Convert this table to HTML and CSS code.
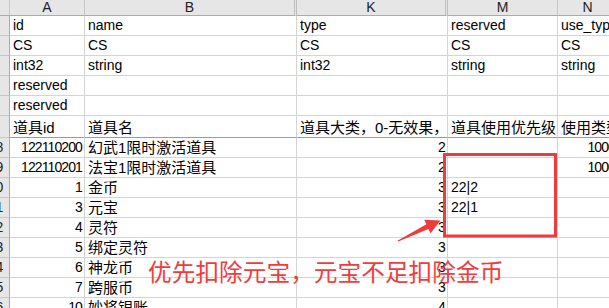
FILE: index.html
```html
<!DOCTYPE html>
<html lang="zh-CN">
<head>
  <meta charset="UTF-8" />
  <title>道具表</title>
  <link rel="stylesheet" href="styles.css">
</head>
<body>
  <div class="sheet">
    <div class="row head">
      <div class="corner"></div>
      <div class="col">A</div>
      <div class="col hidden-after">B</div>
      <div class="col hidden-after">K</div>
      <div class="col">M</div>
      <div class="col">N</div>
    </div>

    <div class="row"><div class="rn">1</div><div class="c">id</div><div class="c">name</div><div class="c">type</div><div class="c">reserved</div><div class="c">use_type</div></div>
    <div class="row"><div class="rn">2</div><div class="c">CS</div><div class="c">CS</div><div class="c">CS</div><div class="c">CS</div><div class="c">CS</div></div>
    <div class="row"><div class="rn">3</div><div class="c">int32</div><div class="c">string</div><div class="c">int32</div><div class="c">string</div><div class="c">string</div></div>
    <div class="row"><div class="rn">4</div><div class="c">reserved</div><div class="c"></div><div class="c"></div><div class="c"></div><div class="c"></div></div>
    <div class="row"><div class="rn">5</div><div class="c">reserved</div><div class="c"></div><div class="c"></div><div class="c"></div><div class="c"></div></div>
    <div class="row frozen"><div class="rn">6</div><div class="c zh">道具id</div><div class="c zh">道具名</div><div class="c zh">道具大类，0-无效果，1-可使用</div><div class="c zh">道具使用优先级</div><div class="c zh">使用类型</div></div>

    <div class="row"><div class="rn">18</div><div class="c num">122110200</div><div class="c zh">幻武1限时激活道具</div><div class="c num">2</div><div class="c"></div><div class="c num">1000</div></div>
    <div class="row"><div class="rn">19</div><div class="c num">122110201</div><div class="c zh">法宝1限时激活道具</div><div class="c num">2</div><div class="c"></div><div class="c num">1000</div></div>
    <div class="row"><div class="rn">20</div><div class="c num">1</div><div class="c zh">金币</div><div class="c num">3</div><div class="c">22|2</div><div class="c"></div></div>
    <div class="row"><div class="rn">21</div><div class="c num">3</div><div class="c zh">元宝</div><div class="c num">3</div><div class="c">22|1</div><div class="c"></div></div>
    <div class="row"><div class="rn">22</div><div class="c num">4</div><div class="c zh">灵符</div><div class="c num">3</div><div class="c"></div><div class="c"></div></div>
    <div class="row"><div class="rn">23</div><div class="c num">5</div><div class="c zh">绑定灵符</div><div class="c num">3</div><div class="c"></div><div class="c"></div></div>
    <div class="row"><div class="rn">24</div><div class="c num">6</div><div class="c zh">神龙币</div><div class="c num">3</div><div class="c"></div><div class="c"></div></div>
    <div class="row"><div class="rn">25</div><div class="c num">7</div><div class="c zh">跨服币</div><div class="c num">3</div><div class="c"></div><div class="c"></div></div>
    <div class="row"><div class="rn">26</div><div class="c num">10</div><div class="c zh">妙将银账</div><div class="c num">4</div><div class="c"></div><div class="c"></div></div>
  </div>

  <!-- annotation drawn over the sheet -->
  <svg class="mark" width="609" height="308" viewBox="0 0 609 308">
    <rect x="444.5" y="154.5" width="111" height="81.5" fill="none" stroke="#ef3b3b" stroke-width="3" />
    <polygon points="397.5,240.8 426.4,224.3 424.2,219.8 440.5,220.5 430.6,233.2 428.4,228.9 398.2,241.6" fill="#ef3b3b" />
  </svg>
  <div class="note">优先扣除元宝，元宝不足扣除金币</div>
</body>
</html>
```

FILE: styles.css
```css
body {
  margin: 0;
  background: #fff;
  overflow: hidden;
  font-family: "Liberation Sans", "Noto Sans CJK SC", sans-serif;
  font-size: 14px;
  color: #000;
}
.sheet {
  margin-left: -18px;
  width: 660px;
}
.row {
  display: grid;
  grid-template-columns: 28px 75px 212px 151px 110px 60px;
  height: 20px;
}
.row > div {
  box-sizing: border-box;
  border-right: 1px solid #d4d4d4;
  border-bottom: 1px solid #d4d4d4;
  overflow: hidden;
  white-space: nowrap;
}

/* column letters */
.head {
  height: 16px;
}
.head > div {
  background: #e6e6e6;
  border-right-color: #c6c6c6;
  border-bottom-color: #ababab;
  text-align: center;
  line-height: 15px;
  color: #222;
}
.head .hidden-after {
  border-right: 3px double #bdbdbd;
}

/* row numbers */
.rn {
  background: #e6e6e6;
  text-align: center;
  line-height: 19px;
  color: #222;
  border-right-color: #ababab !important;
  border-bottom-color: #c6c6c6 !important;
}

.c {
  display: flex;
  align-items: flex-end;
  padding: 0 3px 1px;
  line-height: 17px;
}
.num {
  justify-content: flex-end;
  padding-right: 2px;
  letter-spacing: -0.9px;
}
.zh {
  font-size: 15px;
}

.frozen {
  height: 22px;
}
.frozen > div {
  border-bottom-color: #9c9c9c;
}

.mark {
  position: absolute;
  top: 0;
  left: 0;
  pointer-events: none;
}
.note {
  position: absolute;
  left: 148px;
  top: 258px;
  font-family: "Noto Sans CJK SC", sans-serif;
  font-size: 23.7px;
  line-height: 26px;
  color: #f03c3c;
  white-space: nowrap;
}
```
